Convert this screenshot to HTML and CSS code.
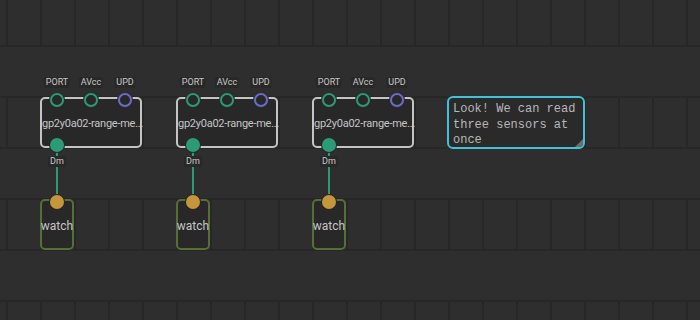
FILE: index.html
```html
<!DOCTYPE html>
<html>
<head>
    <meta charset="UTF-8">
    <title>Patch: three range sensors</title>
    <link rel="stylesheet" href="styles.css">
</head>
<body>

<div class="canvas">
    <!-- Links -->
    <svg class="links" width="700" height="320">
        <line x1="57" y1="150" x2="57" y2="196" />
        <line x1="193" y1="150" x2="193" y2="196" />
        <line x1="329" y1="150" x2="329" y2="196" />
    </svg>

    <!-- Sensor nodes -->
    <div class="node sensor n1">
        <div class="pins pins-in">
            <div class="slot"><span class="label">PORT</span><span class="pin pin-in"></span></div>
            <div class="slot"><span class="label">AVcc</span><span class="pin pin-in"></span></div>
            <div class="slot"><span class="label">UPD</span><span class="pin pin-in pin-pulse"></span></div>
        </div>
        <div class="title" title="gp2y0a02-range-meter">gp2y0a02-range-me...</div>
        <div class="pins pins-out">
            <div class="slot"><span class="pin pin-out"></span><span class="label">Dm</span></div>
        </div>
    </div>

    <div class="node sensor n2">
        <div class="pins pins-in">
            <div class="slot"><span class="label">PORT</span><span class="pin pin-in"></span></div>
            <div class="slot"><span class="label">AVcc</span><span class="pin pin-in"></span></div>
            <div class="slot"><span class="label">UPD</span><span class="pin pin-in pin-pulse"></span></div>
        </div>
        <div class="title" title="gp2y0a02-range-meter">gp2y0a02-range-me...</div>
        <div class="pins pins-out">
            <div class="slot"><span class="pin pin-out"></span><span class="label">Dm</span></div>
        </div>
    </div>

    <div class="node sensor n3">
        <div class="pins pins-in">
            <div class="slot"><span class="label">PORT</span><span class="pin pin-in"></span></div>
            <div class="slot"><span class="label">AVcc</span><span class="pin pin-in"></span></div>
            <div class="slot"><span class="label">UPD</span><span class="pin pin-in pin-pulse"></span></div>
        </div>
        <div class="title" title="gp2y0a02-range-meter">gp2y0a02-range-me...</div>
        <div class="pins pins-out">
            <div class="slot"><span class="pin pin-out"></span><span class="label">Dm</span></div>
        </div>
    </div>

    <!-- Watch nodes -->
    <div class="node watch w1">
        <div class="pins pins-in">
            <div class="slot"><span class="pin pin-watch"></span></div>
        </div>
        <div class="title">watch</div>
    </div>
    <div class="node watch w2">
        <div class="pins pins-in">
            <div class="slot"><span class="pin pin-watch"></span></div>
        </div>
        <div class="title">watch</div>
    </div>
    <div class="node watch w3">
        <div class="pins pins-in">
            <div class="slot"><span class="pin pin-watch"></span></div>
        </div>
        <div class="title">watch</div>
    </div>

    <!-- Comment -->
    <div class="comment">
        <p>Look! We can read three sensors at once</p>
        <span class="resize"></span>
    </div>
</div>

</body>
</html>
```

FILE: styles.css
```css
body {
    margin: 0;
    background: #2e2e2e;
    font-family: Roboto, "Liberation Sans", sans-serif;
}
.canvas {
    position: relative;
    width: 700px;
    height: 320px;
    overflow: hidden;
    background-color: #2e2e2e;
    background-image:
        linear-gradient(to bottom, #272727 0 2px, transparent 2px),
        linear-gradient(to bottom, transparent 0 51px, #2e2e2e 51px 102px),
        linear-gradient(to right, #272727 0 2px, transparent 2px);
    background-size: 100% 51px, 100% 102px, 34px 100%;
    background-position: 0 45px, 0 97px, 6px 0;
}
.links {
    position: absolute;
    left: 0;
    top: 0;
}
.links line {
    stroke: #2c9a76;
    stroke-width: 2;
}

/* nodes */
.node {
    position: absolute;
    height: 51px;
    box-sizing: border-box;
    border: 2px solid #c4c4c4;
    border-radius: 5px;
    background: #282828;
}
.sensor { width: 102px; top: 97px; }
.n1 { left: 40px; }
.n2 { left: 176px; }
.n3 { left: 312px; }

.watch {
    width: 34px;
    top: 199px;
    border-color: #566f36;
}
.w1 { left: 40px; }
.w2 { left: 176px; }
.w3 { left: 312px; }

.title {
    font-size: 11px;
    letter-spacing: -0.25px;
    color: #c6c6c6;
    white-space: nowrap;
    line-height: 49px;
    text-align: center;
}
.watch .title {
    font-size: 12px;
    letter-spacing: 0;
    margin: 0 -4px;
    line-height: 50px;
}

/* pins */
.pins {
    position: absolute;
    left: -2px;
    display: flex;
}
.pins-in { top: -6px; }
.pins-out { top: 39px; }
.slot {
    position: relative;
    width: 34px;
    height: 14px;
    display: flex;
    justify-content: center;
}
.pin {
    display: block;
    width: 14px;
    height: 14px;
    box-sizing: border-box;
    border-radius: 50%;
}
.pin-in {
    border: 2px solid #2c9a76;
    background: #282828;
    box-shadow: 0 0 0 1px #2a2a2a;
}
.pin-pulse {
    border-color: #6a6cc6;
}
.pin-out {
    background: #2c9a76;
    box-shadow: 0 0 0 1px #282828;
}
.pin-watch {
    background: #c6963b;
    box-shadow: 0 0 0 1px #282828;
}
.label {
    position: absolute;
    left: 50%;
    transform: translateX(-50%);
    padding: 0 2px;
    border-radius: 2px;
    background: #282828;
    font-size: 9px;
    line-height: 11px;
    color: #c8c8c8;
    white-space: nowrap;
}
.pins-in .label { bottom: 19px; }
.pins-out .label { top: 18px; }

/* comment */
.comment {
    position: absolute;
    left: 447px;
    top: 96px;
    width: 138px;
    height: 53px;
    box-sizing: border-box;
    border: 2px solid #42c1d9;
    border-radius: 6px;
    background: #2a2a2a;
    padding: 4px 4px 0;
    overflow: hidden;
}
.comment p {
    margin: 0;
    font-family: "Liberation Mono", "DejaVu Sans Mono", monospace;
    font-size: 12px;
    line-height: 15.5px;
    color: #b8b8b8;
}
.resize {
    position: absolute;
    right: 0;
    bottom: 0;
    width: 0;
    height: 0;
    border-left: 8px solid transparent;
    border-bottom: 8px solid #6e6e6e;
}
```
